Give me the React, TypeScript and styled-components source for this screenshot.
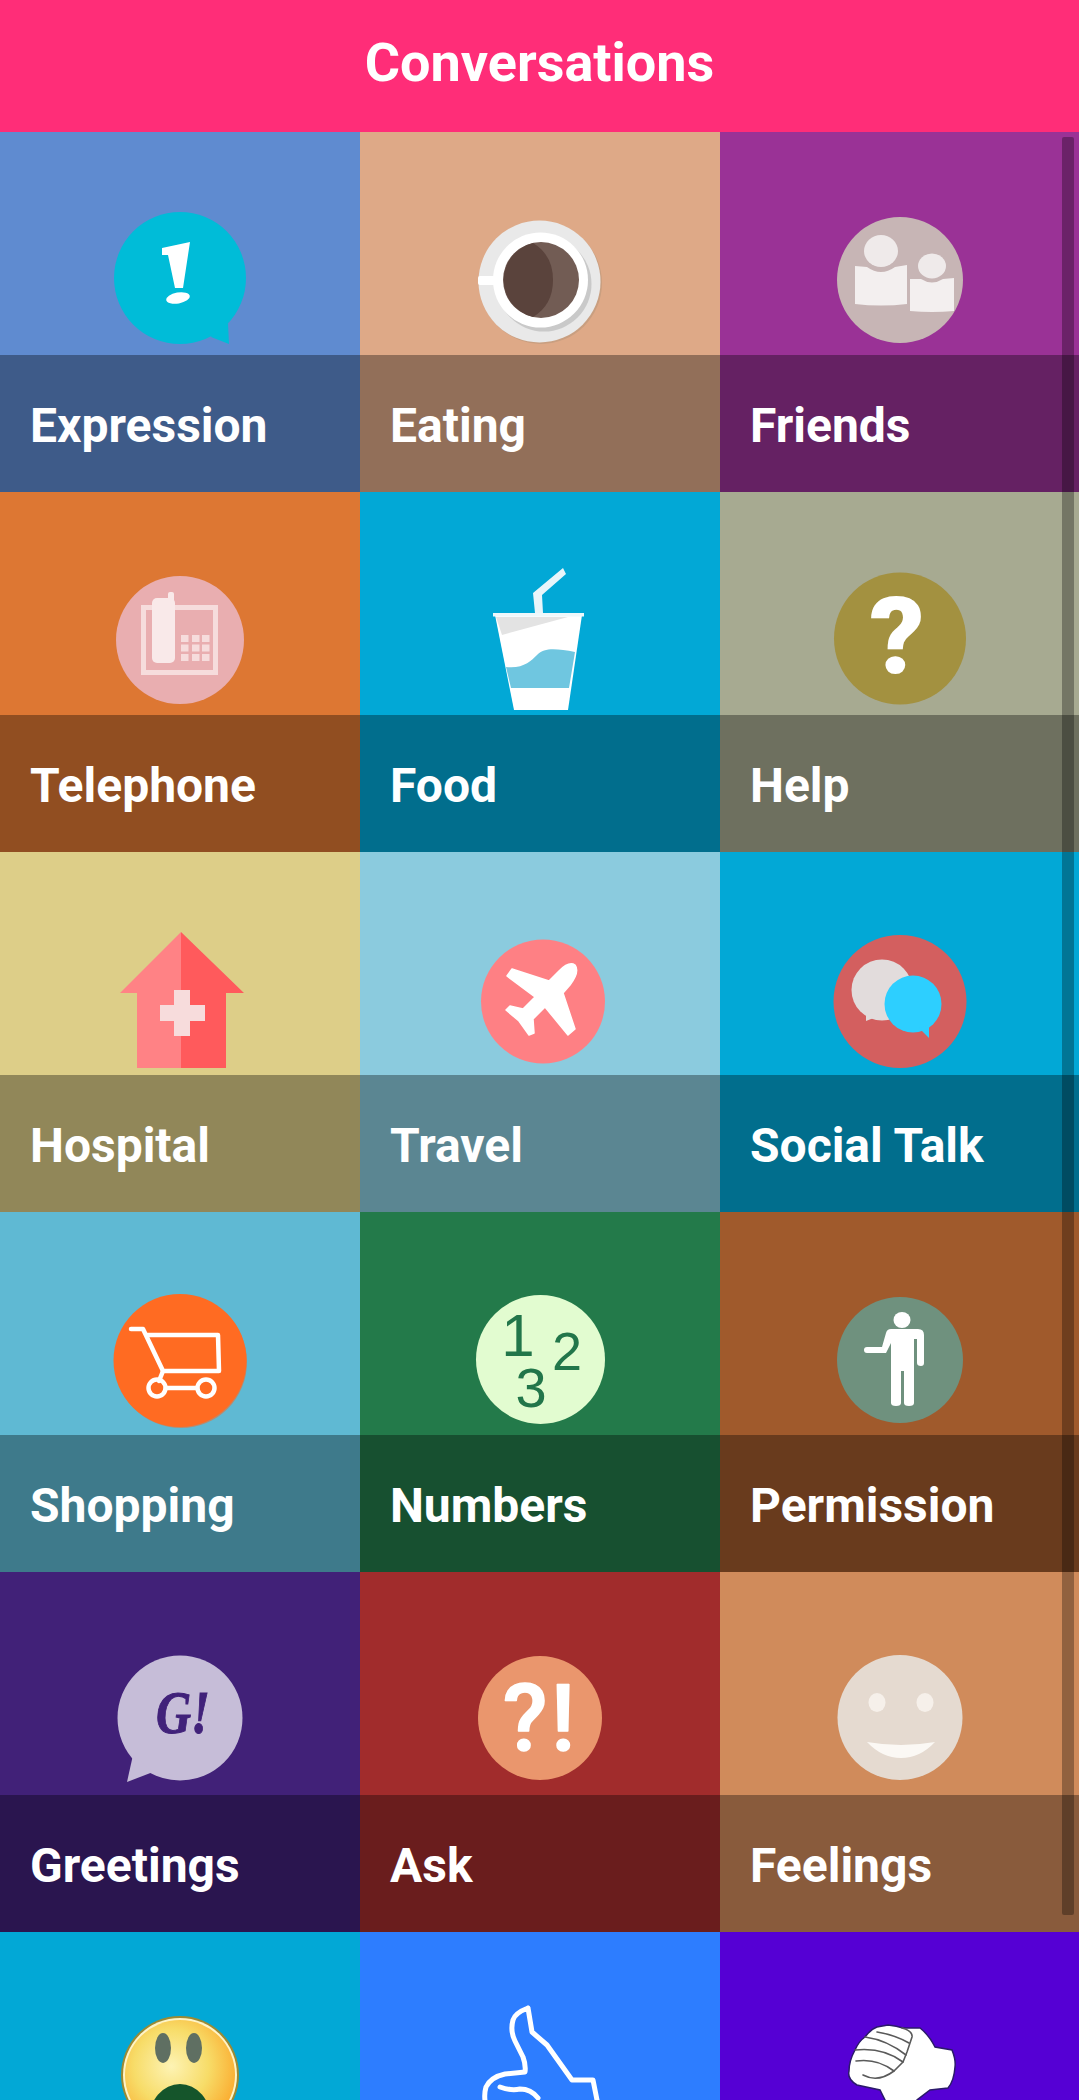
import React from 'react';
import styled, { createGlobalStyle } from 'styled-components';

const GlobalStyle = createGlobalStyle`
  html, body {
    margin: 0;
    padding: 0;
    background: #fff;
    overflow: hidden;
  }
`

const Expression = () => (
  <>
    <circle cx="75" cy="73" r="66" fill="#00bcd8" />
    <polygon points="108,128 123,118 124,139 106,132" fill="#00bcd8" />
    <polygon points="57,43 85,37 78,83 70,83 63,50 57,50" fill="#fff" />
    <ellipse cx="73" cy="93" rx="12" ry="5.5" transform="rotate(-10 73 93)" fill="#fff" />
  </>
)

const Coffee = () => (
  <>
    <circle cx="76" cy="78" r="61" fill="#c99f80" />
    <circle cx="74.5" cy="76.5" r="61" fill="#e9e9e9" />
    <circle cx="79" cy="79" r="47.5" fill="#c9c9c9" />
    <rect x="13" y="71" width="20" height="9" rx="2" fill="#fff" />
    <circle cx="75.5" cy="75" r="47.5" fill="#fff" />
    <circle cx="76" cy="75" r="38" fill="#725c54" />
    <path d="M68 38 A38 38 0 0 0 68 112 Q88 100 88 75 Q88 50 68 38 Z" fill="#5a433c" />
  </>
)

const Friends = () => (
  <>
    <circle cx="75" cy="75" r="63" fill="#c7b5b5" />
    <ellipse cx="56" cy="46" rx="17" ry="16" fill="#efeaea" />
    <path d="M30 61 L42 62 Q56 72 70 62 L82 60 V99 Q56 102 30 99 Z" fill="#f3efef" />
    <ellipse cx="107" cy="61" rx="14" ry="12.5" fill="#efeaea" />
    <path d="M85 74 L96 74 Q107 81 118 74 L129 73 V106 Q107 108 85 106 Z" fill="#f3efef" />
  </>
)

const Telephone = () => {
  const keys = [76, 87, 97].flatMap(x => [70, 79.5, 89].map(y => ({ x, y })))
  return (
    <>
      <circle cx="75" cy="75" r="64" fill="#e9aeb0" />
      <rect x="38.5" y="42.5" width="72" height="65" fill="none" stroke="#f6dcdc" strokeWidth="5" />
      <rect x="63" y="27" width="6" height="10" rx="2" fill="#f9e9e9" />
      <rect x="47" y="33" width="23" height="65" rx="5" fill="#f9e9e9" />
      {keys.map(k => (
        <rect key={`${k.x}-${k.y}`} x={k.x} y={k.y} width="7.5" height="7" fill="#f6dcdc" />
      ))}
    </>
  )
}

const Drink = () => (
  <>
    <polygon points="68,28 98,3 101,9 77,30 78,48 70,48" fill="#e8f5fa" />
    <polygon points="30,50 117,50 103,145 49,145" fill="#fff" />
    <rect x="28" y="48" width="91" height="3.5" fill="#eef8fb" />
    <polygon points="31,52 103,52 37,70" fill="#e3e3e3" />
    <path d="M41 102 C58 104 66 96 72 90 C80 82 92 84 110 87 L104 123 H46 Z" fill="#6fc6e0" />
  </>
)

const Help = () => (
  <>
    <circle cx="75" cy="73.5" r="66" fill="#a39140" />
    <IconText x="72" y="108" $size={108} $weight={900} fill="#fff">?</IconText>
  </>
)

const Hospital = () => (
  <>
    <polygon points="76,7 76,143 32,143 32,68 15,68" fill="#ff8285" />
    <polygon points="76,7 139,68 121,68 121,143 76,143" fill="#ff5a5c" />
    <path d="M69 65 H85 V80 H100 V96 H85 V111 H69 V96 H55 V80 H69 Z" fill="#f7dcdc" />
  </>
)

const Travel = () => (
  <>
    <circle cx="78" cy="76.5" r="62" fill="#fe8084" />
    <path d="M110 40 Q115 47 105 60 L98 68 L110 104 L103 110 L80 82 L68 94 L69 108 L64 110 L54 96 L41 85 L45 81 L58 84 L70 72 L42 51 L47 44 L84 56 L94 46 Q104 36 110 40 Z" fill="#fff" stroke="#fff" strokeWidth="1.5" strokeLinejoin="round" />
  </>
)

const SocialTalk = () => (
  <>
    <circle cx="75" cy="76.5" r="66.5" fill="#d35f5f" />
    <circle cx="57" cy="65" r="30.5" fill="#e2dcdc" />
    <polygon points="41,84 56,90 41,96" fill="#e2dcdc" />
    <circle cx="88" cy="79" r="28.5" fill="#2dcfff" />
    <polygon points="94,103 104,100 104,113" fill="#2dcfff" />
  </>
)

const Cart = () => (
  <>
    <circle cx="76" cy="77" r="66" fill="#b98a6e" />
    <circle cx="75" cy="75.5" r="66.5" fill="#ff6b22" />
    <g fill="none" stroke="#fff" strokeWidth="4.5" strokeLinejoin="round" strokeLinecap="round">
      <path d="M26 44 H38 L58 86 H114 L113 50 H41" />
      <path d="M58 86 L54 96" />
      <circle cx="52" cy="103" r="8.5" />
      <circle cx="101" cy="103" r="8.5" />
      <path d="M61 103 H92" />
    </g>
  </>
)

const Numbers = () => (
  <>
    <circle cx="75.5" cy="74.5" r="64.5" fill="#e2fcd0" />
    <NumberText x="53" y="71" $size={60} fill="#22764a">1</NumberText>
    <NumberText x="102" y="85" $size={54} fill="#22764a">2</NumberText>
    <NumberText x="66" y="122" $size={56} fill="#22764a">3</NumberText>
  </>
)

const Permission = () => (
  <>
    <circle cx="75" cy="75" r="63" fill="#6f917e" />
    <ellipse cx="77" cy="35" rx="8.5" ry="8" fill="#fff" />
    <path d="M66 44 H93 Q99 44 99 50 V78 Q99 81 96 81 Q92 81 92 78 V54 H89 V118 Q89 121 84 121 Q79 121 79 118 V86 H76 V118 Q76 121 71 121 Q66 121 66 118 V58 L61 68 H42 Q39 68 39 65 Q39 62 42 62 H57 L61 48 Q62 44 66 44 Z" fill="#fff" />
  </>
)

const Greetings = () => (
  <>
    <circle cx="75" cy="73" r="62.5" fill="#c6bdd8" />
    <polygon points="28,110 22,137 48,127" fill="#c6bdd8" />
    <IconSerif x="78" y="88" $size={62} textLength={54} lengthAdjust="spacingAndGlyphs" fill="#41227a" stroke="#41227a" strokeWidth="1">G!</IconSerif>
  </>
)

const Ask = () => (
  <>
    <circle cx="75" cy="73" r="62" fill="#ea966d" />
    <IconText x="60" y="105" $size={92} $weight={500} fill="#fff" stroke="#fff" strokeWidth="1.5" strokeLinejoin="round">?</IconText>
    <IconText x="98" y="105" $size={92} $weight={500} fill="#fff" stroke="#fff" strokeWidth="1.5" strokeLinejoin="round">!</IconText>
  </>
)

const Feelings = () => (
  <>
    <circle cx="75" cy="72.5" r="62.5" fill="#e5dad0" />
    <ellipse cx="52" cy="57.5" rx="8.5" ry="9.5" fill="#f6f0ea" />
    <ellipse cx="100" cy="57.5" rx="8.5" ry="9.5" fill="#f6f0ea" />
    <path d="M42 97 Q76 103 110 97 Q95 113 76 113 Q57 113 42 97 Z" fill="#fbf8f4" />
  </>
)

const Scared = () => (
  <>
    <defs>
      <radialGradient id="scaredFace" cx="42%" cy="42%" r="62%">
        <stop offset="0%" stopColor="#fdf3b4" />
        <stop offset="55%" stopColor="#f7dc68" />
        <stop offset="100%" stopColor="#fbac30" />
      </radialGradient>
    </defs>
    <circle cx="75" cy="70" r="59" fill="#9b8a34" />
    <circle cx="75" cy="70" r="57" fill="#fdf4c8" />
    <circle cx="75" cy="70" r="55" fill="url(#scaredFace)" />
    <ellipse cx="58" cy="43" rx="8" ry="15" fill="#5f6f62" />
    <ellipse cx="89" cy="43" rx="8" ry="15" fill="#5f6f62" />
    <ellipse cx="75" cy="115" rx="31" ry="36" fill="#15552b" />
  </>
)

const ThumbUp = () => (
  <g fill="none" stroke="#fff" strokeWidth="5" strokeLinejoin="round" strokeLinecap="round">
    <path d="M63 3 Q50 8 48 15 Q45 26 50 36 L58 52 Q61 60 60 67 L40 69 Q26 72 21 82 Q18 92 22 105 M63 3 L67 27 L82 40 L107 75 L128 75 L133 100 L135 130" />
    <path d="M35 82 Q46 86 55 84 Q66 84 73 93" />
  </g>
)

const ThumbDown = () => (
  <>
    <path d="M63 20 Q72 21 78 23 L95 23 Q104 30 110 42 L127 45 Q131 55 130 62 Q129 76 123 83 L105 85 L92 95 L90 130 L62 130 L60 95 L55 85 L32 80 Q22 74 24 66 Q24 56 30 45 Q34 36 40 32 Q46 24 52 22 Z" fill="#fff" stroke="#2b1a6a" strokeWidth="1.5" />
    <g fill="none" stroke="#5a5a5a" strokeWidth="1.6" strokeLinecap="round" strokeLinejoin="round">
      <path d="M77 23 Q88 26 87 32 L85 38 L82 47 L78 57 L69 66 Q53 78 38 70" />
      <path d="M52 27 Q70 30 84 38" />
      <path d="M40 32 Q62 35 81 50" />
      <path d="M30 45 Q58 42 78 57" />
      <path d="M31 56 Q52 53 69 66" />
    </g>
  </>
)

interface Category {
  id: string
  name?: string
  bg: string
  Icon: React.FC
}

// the last row runs off the bottom of the window, so its labels never show
const categories: Category[] = [
  { id: 'expression', name: 'Expression', bg: '#5f8bd0', Icon: Expression },
  { id: 'eating', name: 'Eating', bg: '#dea987', Icon: Coffee },
  { id: 'friends', name: 'Friends', bg: '#9a3296', Icon: Friends },
  { id: 'telephone', name: 'Telephone', bg: '#dd7733', Icon: Telephone },
  { id: 'food', name: 'Food', bg: '#02a8d6', Icon: Drink },
  { id: 'help', name: 'Help', bg: '#a7aa91', Icon: Help },
  { id: 'hospital', name: 'Hospital', bg: '#ddce88', Icon: Hospital },
  { id: 'travel', name: 'Travel', bg: '#8bcbde', Icon: Travel },
  { id: 'social', name: 'Social Talk', bg: '#02a8d6', Icon: SocialTalk },
  { id: 'shopping', name: 'Shopping', bg: '#5fb9d3', Icon: Cart },
  { id: 'numbers', name: 'Numbers', bg: '#237a4a', Icon: Numbers },
  { id: 'permission', name: 'Permission', bg: '#a05a2c', Icon: Permission },
  { id: 'greetings', name: 'Greetings', bg: '#412178', Icon: Greetings },
  { id: 'ask', name: 'Ask', bg: '#a12c2c', Icon: Ask },
  { id: 'feelings', name: 'Feelings', bg: '#d08b5b', Icon: Feelings },
  { id: 'scared', bg: '#02a8d6', Icon: Scared },
  { id: 'thumb-up', bg: '#2d7dff', Icon: ThumbUp },
  { id: 'thumb-down', bg: '#5500d4', Icon: ThumbDown },
]

const App: React.FC = () => (
  <Page>
    <GlobalStyle />
    <Header>Conversations</Header>
    <Grid>
      {categories.map(({ id, name, bg, Icon }) => (
        <Tile key={id} $bg={bg}>
          <IconArea>
            <IconSvg viewBox="0 0 150 150">
              <Icon />
            </IconSvg>
          </IconArea>
          {name && <Band>{name}</Band>}
        </Tile>
      ))}
    </Grid>
    <ScrollThumb />
  </Page>
)

const Page = styled.div`
  position: relative;
  width: 1079px;
  height: 2100px;
  overflow: hidden;
  font-family: Roboto, "Liberation Sans", sans-serif;
`

const Header = styled.header`
  align-items: center;
  background: #ff2d78;
  box-sizing: border-box;
  color: #fff;
  display: flex;
  font-size: 54px;
  font-weight: 700;
  height: 132px;
  justify-content: center;
  padding-bottom: 8px;
`

const Grid = styled.div`
  display: grid;
  grid-auto-rows: 360px;
  grid-template-columns: 360px 360px 359px;
`

const Tile = styled.div<{ $bg: string }>`
  background: ${props => props.$bg};
  display: flex;
  flex-direction: column;
`

const IconArea = styled.div`
  align-items: flex-end;
  display: flex;
  flex: 0 0 223px;
  justify-content: center;
`

const IconSvg = styled.svg`
  display: block;
  height: 150px;
  overflow: hidden;
  width: 150px;
`

const IconText = styled.text<{ $size: number; $weight: number }>`
  font-family: Roboto, sans-serif;
  font-size: ${props => props.$size}px;
  font-weight: ${props => props.$weight};
  text-anchor: middle;
`

const NumberText = styled.text<{ $size: number }>`
  font-family: "Liberation Sans", sans-serif;
  font-size: ${props => props.$size}px;
  text-anchor: middle;
`

const IconSerif = styled.text<{ $size: number }>`
  font-family: "Liberation Serif", serif;
  font-size: ${props => props.$size}px;
  font-style: italic;
  font-weight: 700;
  text-anchor: middle;
`

const Band = styled.div`
  align-items: center;
  background: rgba(0, 0, 0, 0.34);
  box-sizing: border-box;
  color: #fff;
  display: flex;
  flex: 0 0 137px;
  font-size: 48px;
  font-weight: 700;
  padding: 3px 0 0 30px;
`

const ScrollThumb = styled.div`
  background: rgba(0, 0, 0, 0.3);
  border-radius: 2px;
  height: 1778px;
  position: absolute;
  right: 5px;
  top: 137px;
  width: 12px;
`

export default App
